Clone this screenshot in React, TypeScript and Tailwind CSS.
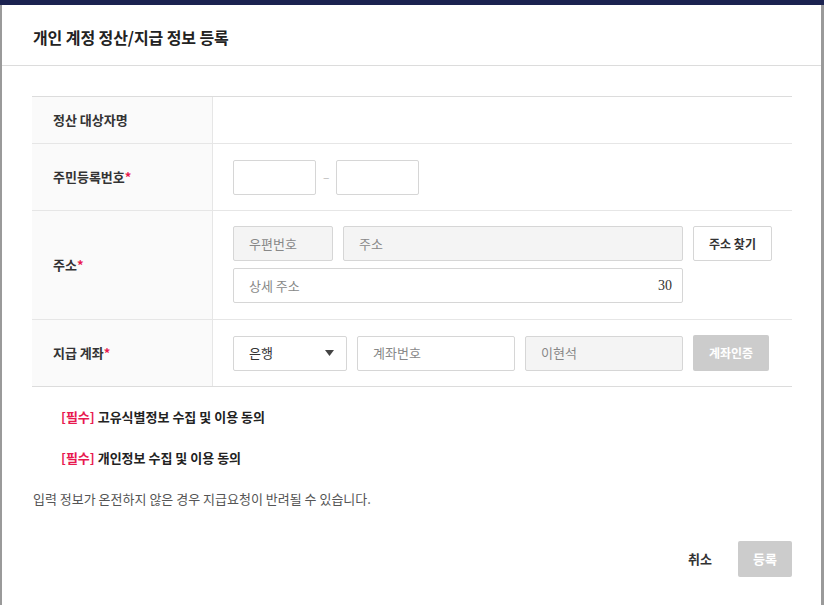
import React from "react";

const font = { fontFamily: '"Noto Sans CJK KR", "Noto Sans", sans-serif' };

export default function App() {
  return (
    <div className="w-[824px] h-[605px] overflow-hidden bg-[#9a9a9a] flex flex-col" style={font}>
      <div className="h-[5px] bg-[#1b2250] shrink-0" />
      <div className="flex flex-1 min-h-0">
        <div className="w-[2px] shrink-0" />
        <div className="flex-1 bg-white flex flex-col">
          <div className="h-[61px] border-b border-[#dcdcdc] flex items-center pl-[31px]">
            <h1 className="text-[16px] font-bold text-[#222] tracking-[-0.1px] mt-[3px]">개인 계정 정산/지급 정보 등록</h1>
          </div>
          <div className="pl-[30px] pr-[29px] pt-[30px] flex flex-col">
            <div className="border-t border-b border-[#dcdcdc] flex flex-col text-[13px]">
              <div className="flex h-[47px] border-b border-[#e6e6e6]">
                <div className="w-[181px] bg-[#fafafa] border-r border-[#e6e6e6] flex items-center pl-[21px] font-bold text-[#333]">정산 대상자명</div>
                <div className="flex-1" />
              </div>
              <div className="flex h-[67px] border-b border-[#e6e6e6]">
                <div className="w-[181px] bg-[#fafafa] border-r border-[#e6e6e6] flex items-center pl-[21px] font-bold text-[#333]">
                  주민등록번호<span className="text-[#e8194f]">*</span>
                </div>
                <div className="flex-1 flex items-center pl-[20px] gap-[7px]">
                  <div className="w-[83px] h-[35px] border border-[#d6d6d6] rounded-[2px] bg-white" />
                  <span className="text-[#bbb] text-[12px] w-[6px] text-center">–</span>
                  <div className="w-[83px] h-[35px] border border-[#d6d6d6] rounded-[2px] bg-white" />
                </div>
              </div>
              <div className="flex h-[109px] border-b border-[#e6e6e6]">
                <div className="w-[181px] bg-[#fafafa] border-r border-[#e6e6e6] flex items-center pl-[21px] font-bold text-[#333]">
                  주소<span className="text-[#e8194f]">*</span>
                </div>
                <div className="flex-1 flex flex-col pl-[20px] pt-[15px] gap-[7px]">
                  <div className="flex gap-[10px]">
                    <div className="w-[100px] h-[35px] border border-[#d6d6d6] rounded-[2px] bg-[#f4f4f4] flex items-center pl-[15px] text-[#888]">우편번호</div>
                    <div className="w-[340px] h-[35px] border border-[#d6d6d6] rounded-[2px] bg-[#f4f4f4] flex items-center pl-[15px] text-[#888]">주소</div>
                    <div className="w-[79px] h-[35px] border border-[#d6d6d6] rounded-[2px] bg-white flex items-center justify-center font-bold text-[#333] text-[12px]">주소 찾기</div>
                  </div>
                  <div className="w-[450px] h-[35px] border border-[#d6d6d6] rounded-[2px] bg-white flex items-center justify-between pl-[15px] pr-[10px]">
                    <span className="text-[#888]">상세 주소</span>
                    <span className="text-[#333] text-[14px]" style={{ fontFamily: '"Liberation Serif", serif' }}>30</span>
                  </div>
                </div>
              </div>
              <div className="flex h-[66px]">
                <div className="w-[181px] bg-[#fafafa] border-r border-[#e6e6e6] flex items-center pl-[21px] font-bold text-[#333]">
                  지급 계좌<span className="text-[#e8194f]">*</span>
                </div>
                <div className="flex-1 flex items-center pl-[20px] gap-[10px]">
                  <div className="w-[114px] h-[35px] border border-[#d6d6d6] rounded-[2px] bg-white flex items-center justify-between pl-[15px] pr-[12px] text-[#333]">
                    <span>은행</span>
                    <svg width="9" height="6" viewBox="0 0 9 6"><path d="M0 0 L9 0 L4.5 6 Z" fill="#444" /></svg>
                  </div>
                  <div className="w-[158px] h-[35px] border border-[#d6d6d6] rounded-[2px] bg-white flex items-center pl-[15px] text-[#888]">계좌번호</div>
                  <div className="w-[158px] h-[35px] border border-[#d6d6d6] rounded-[2px] bg-[#f4f4f4] flex items-center pl-[15px] text-[#888]">이현석</div>
                  <div className="w-[76px] h-[36px] rounded-[2px] bg-[#cccccc] flex items-center justify-center font-bold text-white text-[12px]">계좌인증</div>
                </div>
              </div>
            </div>
            <div className="flex flex-col pl-[29px] pt-[20px] gap-[21px] text-[13px] font-bold text-[#222]">
              <div><span className="text-[#e8194f]">[필수]</span> 고유식별정보 수집 및 이용 동의</div>
              <div><span className="text-[#e8194f]">[필수]</span> 개인정보 수집 및 이용 동의</div>
            </div>
            <div className="pl-[1px] mt-[22px] text-[13px] text-[#555]">입력 정보가 온전하지 않은 경우 지급요청이 반려될 수 있습니다.</div>
            <div className="flex justify-end items-center mt-[32px] gap-[26px]">
              <span className="text-[13px] font-bold text-[#333]">취소</span>
              <div className="w-[54px] h-[36px] rounded-[2px] bg-[#cccccc] flex items-center justify-center text-[13px] font-bold text-white">등록</div>
            </div>
          </div>
        </div>
        <div className="w-[3px] shrink-0" />
      </div>
    </div>
  );
}
